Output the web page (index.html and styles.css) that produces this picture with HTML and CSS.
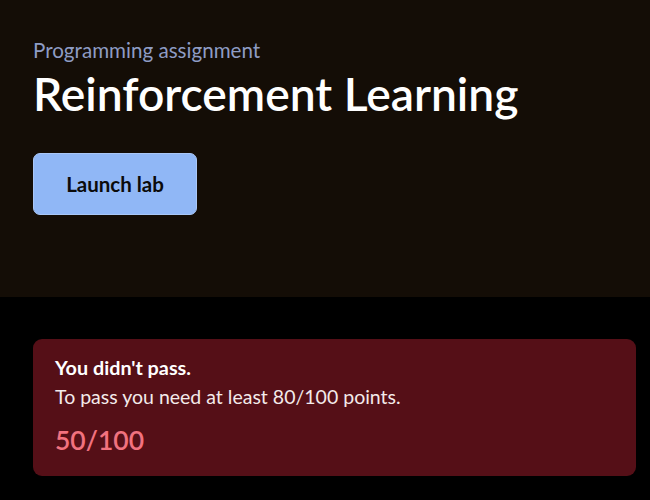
FILE: index.html
```html
<!DOCTYPE html>
<html lang="en">
<head>
<meta charset="utf-8">
<title>Reinforcement Learning</title>
<link rel="stylesheet" href="styles.css">
</head>
<body>
  <header class="hero">
    <p class="eyebrow">Programming assignment</p>
    <h1 class="title">Reinforcement Learning</h1>
    <button class="launch" type="button">Launch lab</button>
  </header>
  <main class="results">
    <section class="grade grade-fail">
      <p class="grade-head">You didn't pass.</p>
      <p class="grade-note">To pass you need at least 80/100 points.</p>
      <p class="grade-score">50/100</p>
    </section>
  </main>
</body>
</html>
```
FILE: styles.css
```css
* { box-sizing: border-box; }

html, body {
  margin: 0;
  background: #000;
  font-family: "Lato", "Noto Sans", sans-serif;
}

.hero {
  background: #140d06;
  height: 297px;
  padding: 38px 33px 0;
  display: flex;
  flex-direction: column;
  align-items: flex-start;
}

.eyebrow {
  margin: 0;
  color: #8e9cc4;
  font-size: 20.6px;
  line-height: 24px;
}

.title {
  margin: 3px 0 0;
  color: #fff;
  font-size: 46.2px;
  font-weight: 600;
  line-height: 56px;
}

.launch {
  margin-top: 32px;
  width: 164px;
  height: 62px;
  background: #90b7f6;
  border: 1px solid #a9c7f7;
  border-radius: 7px;
  color: #0b0b0b;
  font-family: inherit;
  font-size: 20.5px;
  font-weight: 700;
}

.results {
  padding: 42px 14px 0 33px;
}

.grade {
  background: #550f17;
  border-radius: 9px;
  padding: 15px 22px 19px;
}

.grade p { margin: 0; }

.grade-head {
  color: #fff;
  font-size: 19.8px;
  font-weight: 700;
  line-height: 26px;
}

.grade-note {
  margin-top: 4px !important;
  color: #f3eaea;
  font-size: 19.5px;
  line-height: 26px;
}

.grade-score {
  margin-top: 13px !important;
  color: #f2727f;
  font-size: 26.5px;
  font-weight: 600;
  line-height: 34px;
}
```
